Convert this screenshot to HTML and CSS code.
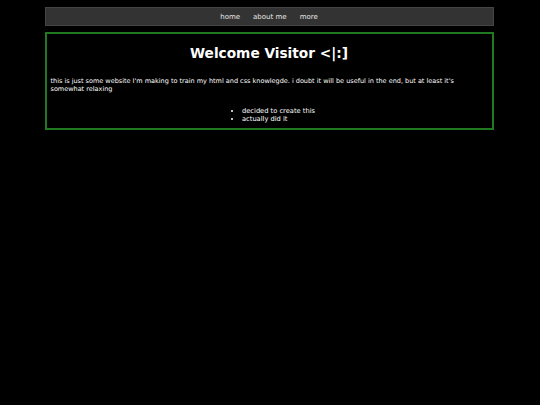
FILE: index.html
```html
<!DOCTYPE html>
<html>
<head>
<meta charset="utf-8">
<link rel="stylesheet" href="styles.css">
</head>
<body>
<nav class="nav">
  <a href="#">home</a>
  <a href="#">about me</a>
  <a href="#">more</a>
</nav>
<main class="box">
  <h1 class="title">Welcome Visitor &lt;|:]</h1>
  <p class="intro">this is just some website I'm making to train my html and css knowlegde. i doubt it will be useful in the end, but at least it's somewhat relaxing</p>
  <div class="listwrap">
    <ul class="list">
      <li>decided to create this</li>
      <li>actually did it</li>
    </ul>
  </div>
</main>
</body>
</html>
```

FILE: styles.css
```css
html, body {
  background: #000;
}
body {
  margin: 0;
  padding-top: 7px;
  font-family: "DejaVu Sans", Verdana, sans-serif;
  color: #fff;
}
.nav {
  width: 447px;
  margin: 0 auto;
  height: 17px;
  background: #333;
  border: 1px solid #444;
  display: flex;
  justify-content: center;
  align-items: center;
  gap: 13px;
  font-size: 7px;
  position: relative;
  left: -1px;
}
.nav a {
  color: #e6e6e6;
  text-decoration: none;
}
.box {
  margin: 6px auto 0;
  border: 2px solid #217a21;
  padding: 0 4px 5px;
  width: 437px;
  position: relative;
  left: -1px;
}
.title {
  text-align: center;
  font-size: 13.7px;
  margin: 10px 0 0;
  line-height: 18px;
}
.intro {
  font-size: 6.5px;
  line-height: 8px;
  margin: 15px 0 0;
}
.listwrap {
  display: flex;
  justify-content: center;
  margin-top: 14px;
}
.list {
  font-size: 6.7px;
  line-height: 8px;
  margin: 0 0 0 9px;
  padding-left: 10px;
}
```
